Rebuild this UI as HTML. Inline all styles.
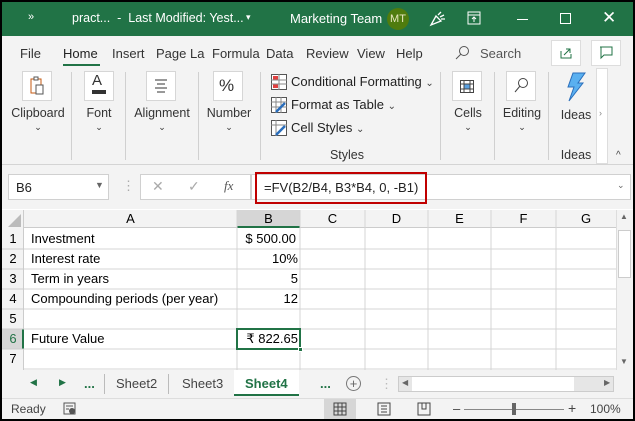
<!DOCTYPE html>
<html><head><meta charset="utf-8"><style>
*{box-sizing:border-box;margin:0;padding:0}
body{width:635px;height:421px;overflow:hidden;background:#000;font-family:"Liberation Sans",sans-serif;font-size:13px;color:#222;position:relative}
.a{position:absolute}
#win{position:absolute;left:2px;top:2px;width:631px;height:417px;background:#f3f3f3;overflow:hidden}
.title{left:0;top:0;width:631px;height:34px;background:#217346;color:#fff;font-size:13px}
.t{position:absolute;white-space:nowrap}
.tab{top:44px;font-size:13px;color:#333}
.sep{position:absolute;width:1px;background:#d0d0d0}
.ib{position:absolute;width:30px;height:30px;border:1px solid #d6d6d6;background:#fff}
.gl{position:absolute;font-size:12.5px;color:#333;text-align:center}
.cell{position:absolute;height:20px;line-height:20px;font-size:13px;color:#000;white-space:nowrap}
.dd{font-size:10px;color:#444}
</style></head><body><div id="win">
<div class="a title">
 <span class="t" style="left:26px;top:9px;font-size:11px">»</span>
 <span class="t" style="left:70px;top:9px;font-size:12.5px">pract...&nbsp; - &nbsp;Last Modified: Yest...</span>
 <span class="t" style="left:244px;top:10px;font-size:9px">▾</span>
 <span class="t" style="left:288px;top:9px">Marketing Team</span>
 <div class="a" style="left:385px;top:6px;width:22px;height:22px;border-radius:50%;background:#4f7c0e;color:#e8e8c0;font-size:11px;text-align:center;line-height:22px">MT</div>
 <svg class="a" style="left:426px;top:8px" width="18" height="18"><path d="M3 15 L8 6 L13 11 Z M10 5 L13 2 M12 7 L16 5 M13 9 L17 9" stroke="#fff" fill="none" stroke-width="1.3"/></svg>
 <svg class="a" style="left:465px;top:9px" width="14" height="14"><rect x="1" y="1" width="12" height="12" stroke="#fff" fill="none"/><path d="M1 4H13M7 11V6M5 8L7 6L9 8" stroke="#fff" fill="none"/></svg>
 <div class="a" style="left:515px;top:17px;width:11px;height:1px;background:#fff"></div>
 <div class="a" style="left:558px;top:11px;width:11px;height:11px;border:1px solid #fff"></div>
 <span class="t" style="left:600px;top:6px;font-size:17px">✕</span>
</div>
<span class="t tab" style="left:18px">File</span>
<span class="t tab" style="left:61px;color:#222">Home</span>
<div class="a" style="left:61px;top:62px;width:37px;height:2px;background:#217346"></div>
<span class="t tab" style="left:110px">Insert</span>
<span class="t tab" style="left:154px">Page La</span>
<span class="t tab" style="left:210px">Formula</span>
<span class="t tab" style="left:264px">Data</span>
<span class="t tab" style="left:304px">Review</span>
<span class="t tab" style="left:355px">View</span>
<span class="t tab" style="left:394px">Help</span>
<svg class="a" style="left:452px;top:43px" width="16" height="16"><circle cx="10" cy="6" r="4.5" stroke="#555" fill="none"/><path d="M7 9L2 14" stroke="#555"/></svg>
<span class="t tab" style="left:478px;color:#555">Search</span>
<div class="a" style="left:549px;top:38px;width:30px;height:26px;background:#fff;border:1px solid #ddd"></div>
<svg class="a" style="left:557px;top:44px" width="14" height="14"><path d="M2 5V12H12V8M5 9L11 3M7 3H11V7" stroke="#217346" fill="none"/></svg>
<div class="a" style="left:589px;top:38px;width:30px;height:26px;background:#fff;border:1px solid #ddd"></div>
<svg class="a" style="left:597px;top:44px" width="14" height="14"><path d="M1 1H13V9H5L2 12V1" stroke="#217346" fill="none"/></svg>

<div class="ib" style="left:20px;top:69px"></div>
<svg class="a" style="left:27px;top:74px" width="16" height="20"><rect x="2" y="3" width="10" height="14" stroke="#c55a11" fill="none"/><rect x="5" y="1" width="4" height="3" stroke="#555" fill="#fff"/><rect x="7" y="9" width="7" height="9" stroke="#555" fill="#fff"/></svg>
<div class="gl" style="left:4px;top:104px;width:64px">Clipboard</div><div class="gl" style="left:4px;top:120px;width:64px;font-size:9px">⌄</div>
<div class="sep" style="left:69px;top:70px;height:88px"></div>
<div class="ib" style="left:82px;top:69px"></div>
<div class="t" style="left:90px;top:70px;font-size:15px;color:#333">A</div>
<div class="a" style="left:90px;top:88px;width:14px;height:4px;background:#333"></div>
<div class="gl" style="left:72px;top:104px;width:50px">Font</div><div class="gl" style="left:72px;top:120px;width:50px;font-size:9px">⌄</div>
<div class="sep" style="left:123px;top:70px;height:88px"></div>
<div class="ib" style="left:144px;top:69px"></div>
<svg class="a" style="left:151px;top:76px" width="16" height="16"><path d="M2 2H14M4 6H12M2 10H14M4 14H12" stroke="#333"/></svg>
<div class="gl" style="left:126px;top:104px;width:68px">Alignment</div><div class="gl" style="left:126px;top:120px;width:68px;font-size:9px">⌄</div>
<div class="sep" style="left:196px;top:70px;height:88px"></div>
<div class="ib" style="left:211px;top:69px"></div>
<div class="t" style="left:217px;top:74px;font-size:17px;color:#333">%</div>
<div class="gl" style="left:198px;top:104px;width:58px">Number</div><div class="gl" style="left:198px;top:120px;width:58px;font-size:9px">⌄</div>
<div class="sep" style="left:258px;top:70px;height:88px"></div>
<svg class="a" style="left:269px;top:72px" width="16" height="16"><rect x="0.5" y="0.5" width="15" height="15" fill="#fff" stroke="#555"/><rect x="2" y="2" width="5" height="4" fill="#e04040"/><rect x="2" y="10" width="5" height="4" fill="#e04040"/><path d="M0 6H16M0 10H16M8 0V16" stroke="#888"/></svg>
<span class="t" style="left:289px;top:72px">Conditional Formatting <span class="dd">⌄</span></span>
<svg class="a" style="left:269px;top:95px" width="16" height="16"><rect x="0.5" y="0.5" width="15" height="15" fill="#fff" stroke="#555"/><path d="M0 5H16M0 10H16M5 0V16M10 0V16" stroke="#888"/><path d="M5 15L14 6" stroke="#2a6ebb" stroke-width="2.5"/></svg>
<span class="t" style="left:289px;top:95px">Format as Table <span class="dd">⌄</span></span>
<svg class="a" style="left:269px;top:118px" width="16" height="16"><rect x="0.5" y="0.5" width="15" height="15" fill="#fff" stroke="#555"/><path d="M0 5H16M5 0V16" stroke="#888"/><path d="M5 15L14 6" stroke="#2a6ebb" stroke-width="2.5"/></svg>
<span class="t" style="left:289px;top:118px">Cell Styles <span class="dd">⌄</span></span>
<div class="gl" style="left:300px;top:146px;width:90px">Styles</div>
<div class="sep" style="left:438px;top:70px;height:88px"></div>
<div class="ib" style="left:450px;top:69px"></div>
<svg class="a" style="left:457px;top:76px" width="16" height="16"><rect x="1.5" y="2.5" width="13" height="12" fill="#fff" stroke="#444"/><rect x="5" y="6" width="6" height="5" fill="#5aa0e0"/><path d="M1 6H15M1 11H15M5 2V15M11 2V15" stroke="#444"/></svg>
<div class="gl" style="left:440px;top:104px;width:52px">Cells</div><div class="gl" style="left:440px;top:120px;width:52px;font-size:9px">⌄</div>
<div class="sep" style="left:492px;top:70px;height:88px"></div>
<div class="ib" style="left:504px;top:69px"></div>
<svg class="a" style="left:511px;top:75px" width="16" height="18"><circle cx="10" cy="6" r="4.5" stroke="#444" fill="none"/><path d="M7 9L2 15" stroke="#444"/></svg>
<div class="gl" style="left:494px;top:104px;width:52px">Editing</div><div class="gl" style="left:494px;top:120px;width:52px;font-size:9px">⌄</div>
<div class="sep" style="left:546px;top:70px;height:88px"></div>
<svg class="a" style="left:562px;top:70px" width="24" height="30"><path d="M9 1H21L14 11H19L5 29L10 15H4Z" fill="#5ab0f0" stroke="#2a6ebb"/></svg>
<div class="gl" style="left:552px;top:106px;width:44px">Ideas</div>
<div class="gl" style="left:552px;top:146px;width:44px">Ideas</div>
<div class="a" style="left:594px;top:66px;width:12px;height:96px;background:#fff;border:1px solid #ddd"></div>
<span class="t" style="left:597px;top:106px;font-size:9px;color:#888">›</span>
<span class="t" style="left:614px;top:148px;font-size:10px;color:#444">^</span>

<div class="a" style="left:0;top:162px;width:631px;height:206px;background:#fff;border-top:1px solid #d4d4d4"></div>
<div class="a" style="left:0;top:163px;width:631px;height:44px;background:#f3f3f3"></div>
<div class="a" style="left:6px;top:172px;width:101px;height:26px;background:#fff;border:1px solid #d0d0d0"></div>
<span class="t" style="left:14px;top:178px">B6</span>
<span class="t" style="left:93px;top:178px;font-size:9px;color:#666">▼</span>
<span class="t" style="left:120px;top:176px;color:#aaa">⋮</span>
<div class="a" style="left:138px;top:172px;width:111px;height:26px;background:#fff;border:1px solid #d0d0d0"></div>
<span class="t" style="left:150px;top:176px;color:#aaa;font-size:14px">✕</span>
<span class="t" style="left:186px;top:176px;color:#aaa;font-size:14px">✓</span>
<span class="t" style="left:222px;top:176px;color:#555;font-style:italic;font-family:'Liberation Serif',serif">fx</span>
<div class="a" style="left:249px;top:172px;width:380px;height:26px;background:#fff;border:1px solid #d0d0d0"></div>
<div class="a" style="left:253px;top:170px;width:172px;height:32px;border:2px solid #c00000"></div>
<span class="t" style="left:262px;top:178px">=FV(B2/B4, B3*B4, 0, -B1)</span>
<span class="t" style="left:615px;top:178px;font-size:9px;color:#666">⌄</span>

<div class="a" style="left:0;top:208px;width:614px;height:18px;background:#f3f3f3;border-bottom:1px solid #ccc"></div>
<div class="a" style="left:0;top:208px;width:22px;height:160px;background:#f3f3f3;border-right:1px solid #ccc"></div>
<svg class="a" style="left:6px;top:212px" width="14" height="13"><path d="M13 0V13H0Z" fill="#bbb"/></svg>
<div class="a" style="left:235px;top:208px;width:63px;height:18px;background:#d6d6d6;border-bottom:2px solid #217346"></div>
<div class="a" style="left:0;top:327px;width:22px;height:20px;background:#d6d6d6;border-right:2px solid #217346"></div>
<svg class="a" style="left:0;top:208px" width="614" height="160">
<g stroke="#d4d4d4">
<path d="M235 0V160M298 0V160M363 0V160M426 0V160M489 0V160M554 0V160"/>
<path d="M22 39H614M22 59H614M22 79H614M22 99H614M22 119H614M22 139H614M22 159H614"/>
<path d="M0 39H22M0 59H22M0 79H22M0 99H22M0 119H22M0 139H22" stroke="#ccc"/>
</g></svg>
<div class="cell" style="left:22px;top:208px;width:213px;height:18px;line-height:18px;text-align:center">A</div>
<div class="cell" style="left:235px;top:208px;width:63px;height:18px;line-height:18px;text-align:center">B</div>
<div class="cell" style="left:298px;top:208px;width:65px;height:18px;line-height:18px;text-align:center">C</div>
<div class="cell" style="left:363px;top:208px;width:63px;height:18px;line-height:18px;text-align:center">D</div>
<div class="cell" style="left:426px;top:208px;width:63px;height:18px;line-height:18px;text-align:center">E</div>
<div class="cell" style="left:489px;top:208px;width:65px;height:18px;line-height:18px;text-align:center">F</div>
<div class="cell" style="left:554px;top:208px;width:60px;height:18px;line-height:18px;text-align:center">G</div>
<div class="cell" style="left:0;top:227px;width:22px;text-align:center">1</div>
<div class="cell" style="left:0;top:247px;width:22px;text-align:center">2</div>
<div class="cell" style="left:0;top:267px;width:22px;text-align:center">3</div>
<div class="cell" style="left:0;top:287px;width:22px;text-align:center">4</div>
<div class="cell" style="left:0;top:307px;width:22px;text-align:center">5</div>
<div class="cell" style="left:0;top:327px;width:22px;text-align:center;color:#217346">6</div>
<div class="cell" style="left:0;top:347px;width:22px;text-align:center">7</div>
<div class="cell" style="left:29px;top:227px">Investment</div>
<div class="cell" style="left:29px;top:247px">Interest rate</div>
<div class="cell" style="left:29px;top:267px">Term in years</div>
<div class="cell" style="left:29px;top:287px">Compounding periods (per year)</div>
<div class="cell" style="left:29px;top:327px">Future Value</div>
<div class="cell" style="left:235px;top:227px;width:59px;text-align:right">$ 500.00</div>
<div class="cell" style="left:235px;top:247px;width:61px;text-align:right">10%</div>
<div class="cell" style="left:235px;top:267px;width:61px;text-align:right">5</div>
<div class="cell" style="left:235px;top:287px;width:61px;text-align:right">12</div>
<div class="a" style="left:234px;top:326px;width:65px;height:22px;border:2px solid #217346"></div>
<div class="a" style="left:296px;top:345px;width:5px;height:5px;background:#217346;border:1px solid #fff"></div>
<div class="cell" style="left:235px;top:327px;width:61px;text-align:right">₹ 822.65</div>
<div class="a" style="left:614px;top:208px;width:17px;height:160px;background:#f3f3f3;border-left:1px solid #ddd"></div>
<div class="a" style="left:616px;top:228px;width:13px;height:48px;background:#fff;border:1px solid #ccc"></div>
<span class="t" style="left:618px;top:210px;font-size:8px;color:#666">▲</span>
<span class="t" style="left:618px;top:355px;font-size:8px;color:#666">▼</span>

<div class="a" style="left:0;top:368px;width:631px;height:28px;background:#f3f3f3"></div>
<span class="t" style="left:28px;top:375px;font-size:9px;color:#217346">◀</span>
<span class="t" style="left:57px;top:375px;font-size:9px;color:#217346">▶</span>
<span class="t" style="left:82px;top:374px;font-weight:bold;color:#217346">...</span>
<div class="sep" style="left:102px;top:372px;height:20px;background:#bbb"></div>
<span class="t" style="left:114px;top:374px;color:#444">Sheet2</span>
<div class="sep" style="left:166px;top:372px;height:20px;background:#bbb"></div>
<span class="t" style="left:180px;top:374px;color:#444">Sheet3</span>
<div class="a" style="left:232px;top:368px;width:65px;height:26px;background:#fff;border-bottom:2px solid #217346"></div>
<span class="t" style="left:243px;top:374px;color:#217346;font-weight:bold">Sheet4</span>
<span class="t" style="left:318px;top:374px;font-weight:bold;color:#217346">...</span>
<div class="a" style="left:344px;top:374px;width:15px;height:15px;border:1px solid #777;border-radius:50%;text-align:center;line-height:13px;font-size:13px;color:#666">+</div>
<span class="t" style="left:378px;top:374px;color:#bbb">⋮</span>
<div class="a" style="left:396px;top:374px;width:216px;height:16px;background:#e6e6e6;border:1px solid #ccc"></div>
<div class="a" style="left:410px;top:375px;width:162px;height:14px;background:#fff"></div>
<span class="t" style="left:400px;top:376px;font-size:8px;color:#666">◀</span>
<span class="t" style="left:602px;top:376px;font-size:8px;color:#666">▶</span>

<div class="a" style="left:0;top:396px;width:631px;height:21px;background:#f3f3f3;border-top:1px solid #ddd"></div>
<span class="t" style="left:9px;top:400px;font-size:12px;color:#444">Ready</span>
<svg class="a" style="left:61px;top:400px" width="14" height="14"><rect x="1" y="1" width="11" height="11" stroke="#555" fill="none"/><path d="M3 4H10M3 7H6" stroke="#555"/><circle cx="9" cy="9" r="3" fill="#555"/></svg>
<div class="a" style="left:322px;top:397px;width:32px;height:20px;background:#d6d6d6"></div>
<svg class="a" style="left:331px;top:400px" width="14" height="14"><path d="M1 1H13V13H1ZM1 5H13M1 9H13M5 1V13M9 1V13" stroke="#444" fill="none"/></svg>
<svg class="a" style="left:375px;top:400px" width="14" height="14"><rect x="1" y="1" width="12" height="12" stroke="#444" fill="none"/><path d="M4 4H10M4 7H10M4 10H10" stroke="#444"/></svg>
<svg class="a" style="left:415px;top:400px" width="14" height="14"><path d="M1 1H13V13H1ZM5 1V7H9V1" stroke="#444" fill="none"/></svg>
<span class="t" style="left:451px;top:399px;color:#444">–</span>
<div class="a" style="left:462px;top:407px;width:100px;height:1px;background:#888"></div>
<div class="a" style="left:510px;top:401px;width:4px;height:12px;background:#666"></div>
<span class="t" style="left:566px;top:398px;color:#444;font-size:14px">+</span>
<span class="t" style="left:588px;top:400px;font-size:12px;color:#444">100%</span>
</div></body></html>
